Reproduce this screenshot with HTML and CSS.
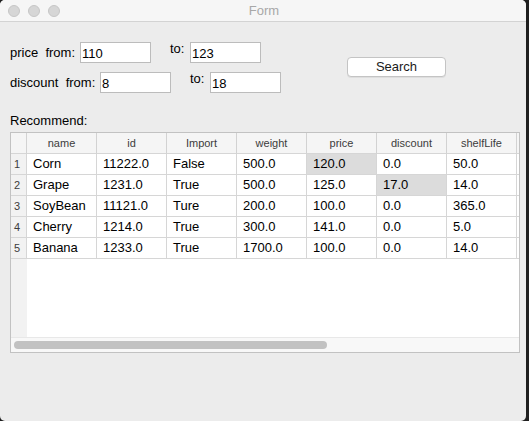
FILE: index.html
```html
<!DOCTYPE html>
<html>
<head>
<meta charset="utf-8">
<link rel="stylesheet" href="styles.css">
</head>
<body>
<div class="window">
  <div class="titlebar">
    <div class="lights"><span class="light"></span><span class="light"></span><span class="light"></span></div>
    <div class="title">Form</div>
  </div>
  <div class="content">
    <div class="search-area">
      <div class="fields">
        <div class="form-row">
          <span class="label l1">price&nbsp; from:</span>
          <input class="field" value="110">
          <span class="to">to:</span>
          <input class="field" value="123">
        </div>
        <div class="form-row">
          <span class="label l2">discount&nbsp; from:</span>
          <input class="field" value="8">
          <span class="to">to:</span>
          <input class="field" value="18">
        </div>
      </div>
      <button class="btn">Search</button>
    </div>
    <div class="rec-label">Recommend:</div>
    <div class="table">
      <div class="grid">
        <div class="hh corner"></div>
        <div class="hh">name</div><div class="hh">id</div><div class="hh">Import</div><div class="hh">weight</div><div class="hh">price</div><div class="hh">discount</div><div class="hh">shelfLife</div><div class="hh rest"></div>

        <div class="vh">1</div>
        <div class="c">Corn</div><div class="c">11222.0</div><div class="c">False</div><div class="c">500.0</div><div class="c sel">120.0</div><div class="c">0.0</div><div class="c">50.0</div><div class="c rest"></div>

        <div class="vh">2</div>
        <div class="c">Grape</div><div class="c">1231.0</div><div class="c">True</div><div class="c">500.0</div><div class="c">125.0</div><div class="c sel">17.0</div><div class="c">14.0</div><div class="c rest"></div>

        <div class="vh">3</div>
        <div class="c">SoyBean</div><div class="c">11121.0</div><div class="c">Ture</div><div class="c">200.0</div><div class="c">100.0</div><div class="c">0.0</div><div class="c">365.0</div><div class="c rest"></div>

        <div class="vh">4</div>
        <div class="c">Cherry</div><div class="c">1214.0</div><div class="c">True</div><div class="c">300.0</div><div class="c">141.0</div><div class="c">0.0</div><div class="c">5.0</div><div class="c rest"></div>

        <div class="vh">5</div>
        <div class="c">Banana</div><div class="c">1233.0</div><div class="c">True</div><div class="c">1700.0</div><div class="c">100.0</div><div class="c">0.0</div><div class="c">14.0</div><div class="c rest"></div>
      </div>
      <div class="filler"></div>
      <div class="hscroll"><div class="thumb"></div></div>
    </div>
  </div>
</div>
</body>
</html>
```

FILE: styles.css
```css
html, body {
  margin: 0;
  padding: 0;
  background: #1f1f1f;
  width: 529px;
  height: 421px;
  overflow: hidden;
  font-family: "Liberation Sans", Arial, sans-serif;
  font-size: 13px;
  color: #000;
}

.window {
  width: 526px;
  height: 421px;
  background: #ececec;
  border-radius: 5px 5px 5px 5px;
  overflow: hidden;
  display: flex;
  flex-direction: column;
}

.titlebar {
  height: 21px;
  flex: none;
  background: #f6f6f6;
  border-bottom: 1px solid #d3d3d3;
  position: relative;
  display: flex;
  align-items: center;
  justify-content: center;
}

.lights {
  position: absolute;
  left: 8px;
  top: 5px;
  display: flex;
  gap: 8px;
}

.light {
  width: 10px;
  height: 10px;
  border-radius: 50%;
  background: #d6d6d6;
  border: 1px solid #c6c6c6;
}

.title {
  color: #a8a8a8;
  font-size: 13px;
  line-height: 16px;
  margin-left: 2px;
}

.content {
  padding: 20px 0 0 10px;
  display: flex;
  flex-direction: column;
}

.search-area {
  display: flex;
  align-items: center;
}

.fields {
  display: flex;
  flex-direction: column;
  gap: 9px;
}

.form-row {
  display: flex;
  height: 21px;
  align-items: center;
}

.label {
  line-height: 16px;
  white-space: nowrap;
}

.l1 { width: 70px; }
.l2 { width: 90px; }

.field {
  box-sizing: border-box;
  width: 71px;
  height: 21px;
  border: 1px solid #bcbcbc;
  background: #fff;
  font-family: "Liberation Sans", Arial, sans-serif;
  font-size: 13px;
  padding: 2px 0 0 1px;
  margin: 0;
  color: #000;
  outline: none;
}

.to {
  width: 20px;
  margin-left: 19px;
  align-self: flex-start;
  line-height: 16px;
  margin-top: -1px;
}

.btn {
  margin-left: 66px;
  margin-top: -2px;
  width: 99px;
  height: 20px;
  box-sizing: border-box;
  background: #fff;
  border: 1px solid #c4c4c4;
  border-radius: 4px;
  box-shadow: 0 1px 0 rgba(0,0,0,0.06);
  font-family: "Liberation Sans", Arial, sans-serif;
  font-size: 13px;
  color: #1a1a1a;
  padding: 0;
  line-height: 17px;
}

.rec-label {
  margin-top: 20px;
  line-height: 16px;
  height: 16px;
}

.table {
  margin-top: 3px;
  width: 510px;
  height: 221px;
  box-sizing: border-box;
  border: 1px solid #c2c2c2;
  background: #fff;
  display: flex;
  flex-direction: column;
}

.grid {
  display: grid;
  grid-template-columns: 16px repeat(7, 70px) 1fr;
  grid-auto-rows: 21px;
}

.hh {
  box-sizing: border-box;
  background: #f5f5f5;
  border-right: 1px solid #d2d2d2;
  border-bottom: 1px solid #d6d6d6;
  font-size: 11px;
  color: #3c3c3c;
  text-align: center;
  line-height: 20px;
}

.hh.rest { border-right: none; }

.vh {
  box-sizing: border-box;
  background: #f2f2f2;
  border-right: 1px solid #d6d6d6;
  border-bottom: 1px solid #d6d6d6;
  font-size: 11px;
  color: #3c3c3c;
  line-height: 20px;
  padding-left: 3px;
}

.c {
  box-sizing: border-box;
  border-right: 1px solid #d6d6d6;
  border-bottom: 1px solid #d6d6d6;
  padding-left: 6px;
  line-height: 20px;
  white-space: nowrap;
  overflow: hidden;
}

.c.rest { border-right: none; padding: 0; }

.sel { background: #dcdcdc; }

.filler {
  flex: 1;
  background: linear-gradient(to right, #f2f2f2 0 16px, #fff 16px);
}

.hscroll {
  height: 15px;
  flex: none;
  box-sizing: border-box;
  background: #f8f8f8;
  border-top: 1px solid #e8e8e8;
  padding: 3px 0 0 3px;
}

.thumb {
  width: 313px;
  height: 8px;
  border-radius: 4px;
  background: #c2c2c2;
}
```
